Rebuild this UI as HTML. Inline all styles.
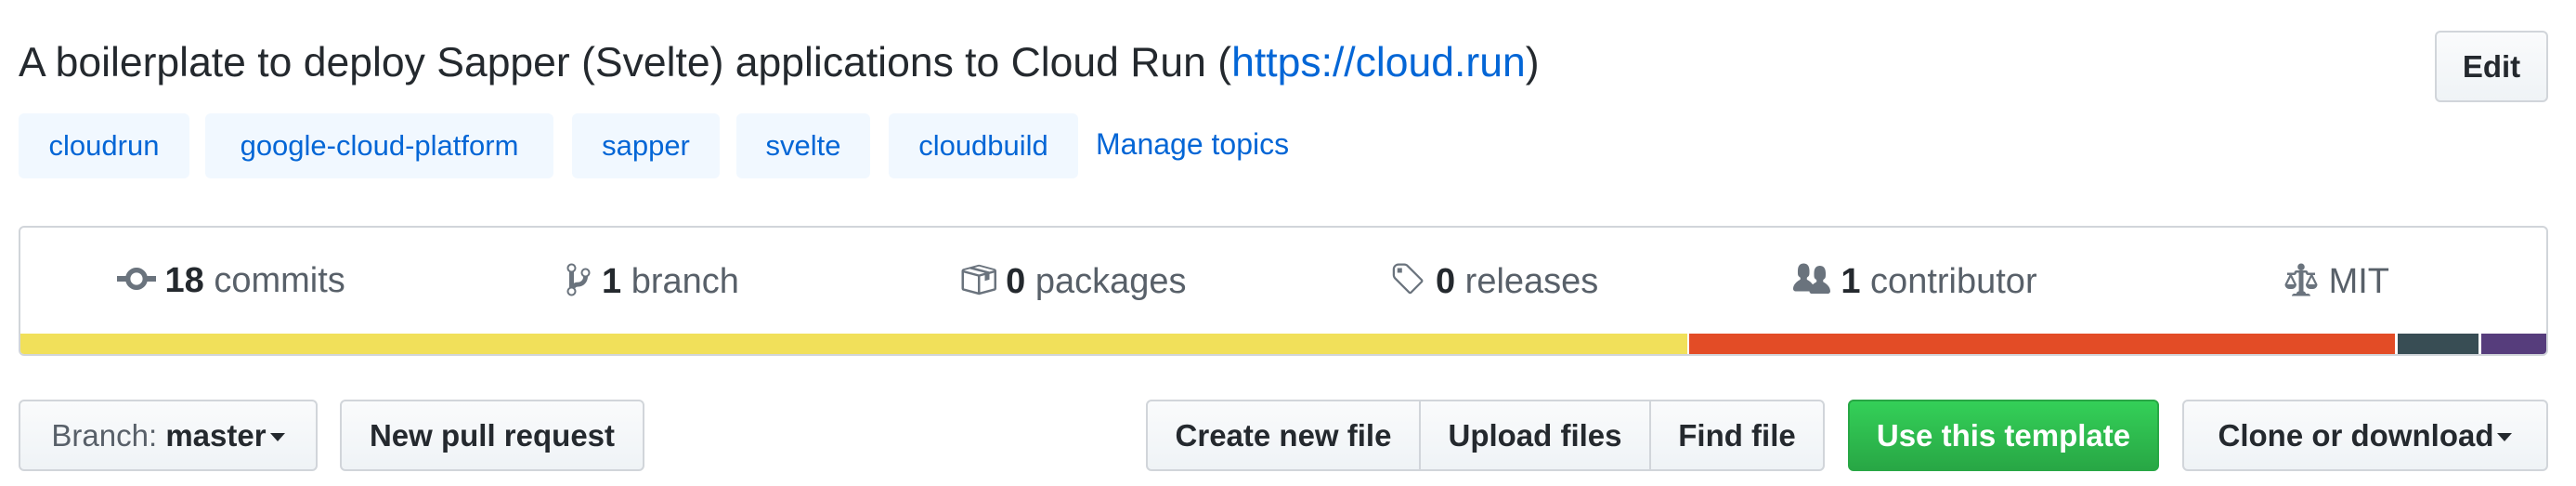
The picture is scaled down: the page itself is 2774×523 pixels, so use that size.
<!DOCTYPE html>
<html><head><meta charset="utf-8"><style>
*{box-sizing:border-box;margin:0;padding:0}
body{width:2774px;height:523px;background:#fff;font-family:"Liberation Sans",Arial,sans-serif;position:relative;overflow:hidden;color:#24292e}
.abs{position:absolute}
.title{left:20px;top:38px;font-size:44.5px;line-height:60px;white-space:nowrap}
.title a{color:#0366d6;text-decoration:none}
.topic{position:absolute;top:122px;height:70px;background:#f1f8ff;border-radius:6px;color:#0366d6;font-size:31px;line-height:70px;text-align:center}
.btn{position:absolute;top:430px;height:77px;border:2px solid #d1d5da;border-radius:6px;background:linear-gradient(#fafbfc,#eff3f6);font-size:33px;font-weight:bold;line-height:73px;text-align:center;white-space:nowrap}
.box{left:20px;top:243px;width:2724px;height:140px;border:2px solid #d1d5da;border-radius:6px;overflow:hidden}
.stats{display:flex;height:115px;align-items:center}
.stat{flex:1;text-align:center;font-size:38px;color:#586069;white-space:nowrap}
.stat b{color:#24292e}
.stat svg{vertical-align:-6px;margin-right:10px;fill:#6a737d}
.bar{position:absolute;left:0;bottom:0;height:22px;display:flex;width:100%}
.caret{display:inline-block;width:0;height:0;border-left:8px solid transparent;border-right:8px solid transparent;border-top:9px solid #24292e;vertical-align:5px;margin-left:4px}
</style></head><body>
<div class="abs title">A boilerplate to deploy Sapper (Svelte) applications to Cloud Run (<a>https://cloud.run</a>)</div>
<div class="btn" style="left:2622px;top:33px;width:122px;height:77px">Edit</div>

<div class="topic" style="left:20px;width:184px">cloudrun</div>
<div class="topic" style="left:221px;width:375px">google-cloud-platform</div>
<div class="topic" style="left:616px;width:159px">sapper</div>
<div class="topic" style="left:793px;width:144px">svelte</div>
<div class="topic" style="left:957px;width:204px">cloudbuild</div>
<div class="abs" style="left:1180px;top:120px;line-height:70px;font-size:32px;color:#0366d6">Manage topics</div>

<div class="abs box">
<div class="stats">
<div class="stat"><svg width="42" height="24" viewBox="0 0 14 8" style="vertical-align:2px"><path d="M10.86 3C10.41 1.28 8.86 0 7 0 5.14 0 3.590 1.28 3.14 3H0v2h3.14C3.59 6.72 5.14 8 7 8s3.41-1.28 3.86-3H14V3h-3.14zM7 6.2c-1.22 0-2.2-.98-2.2-2.2 0-1.22.98-2.2 2.2-2.2 1.22 0 2.2.98 2.2 2.2 0 1.22-.98 2.2-2.2 2.2z"/></svg><b>18</b> commits</div>
<div class="stat"><svg width="30" height="40" viewBox="0 0 10 16"><path d="M10 5c0-1.11-.89-2-2-2a1.993 1.993 0 00-1 3.72v.3c-.02.52-.23.98-.63 1.38-.4.4-.86.61-1.38.63-.83.02-1.48.16-2 .45V4.720a1.993 1.993 0 00-1-3.72C.88 1 0 1.89 0 3a2 2 0 001 1.72v6.56c-.59.35-1 .99-1 1.72 0 1.11.89 2 2 2 1.11 0 2-.89 2-2 0-.53-.2-1-.53-1.36.09-.06.48-.41.59-.47.25-.11.56-.17.94-.17 1.05-.05 1.95-.45 2.750-1.25S8.95 7.77 9 6.73h-.02C9.59 6.37 10 5.73 10 5zM2 1.8c.66 0 1.2.55 1.2 1.2 0 .65-.55 1.2-1.2 1.2C1.35 4.2.8 3.65.8 3c0-.65.55-1.2 1.2-1.2zm0 12.41c-.66 0-1.2-.55-1.2-1.2 0-.65.55-1.2 1.2-1.2.65 0 1.2.55 1.2 1.2 0 .65-.55 1.2-1.2 1.2zm6-8c-.66 0-1.2-.55-1.2-1.2 0-.65.55-1.2 1.2-1.2.65 0 1.2.55 1.2 1.2 0 .65-.55 1.2-1.2 1.2z"/></svg><b>1</b> branch</div>
<div class="stat"><svg width="40" height="40" viewBox="0 0 16 16"><path d="M1 4.27v7.47c0 .45.3.84.75.97l6.5 1.73c.16.05.34.05.5 0l6.5-1.73c.45-.13.75-.52.75-.97V4.27c0-.45-.3-.84-.75-.97l-6.5-1.74a1.4 1.4 0 00-.5 0L1.75 3.3c-.45.13-.75.52-.75.97zm7 9.09l-6-1.59V5l6 1.61v6.75zM2 4l2.5-.67L11 5.06l-2.5.67L2 4zm13 7.77l-6 1.590V6.61l2-.55V8.5l2-.53V5.53L15 5v6.77zm-2-7.24L6.5 2.8l2-.53L15 4l-2 .53z"/></svg><b>0</b> packages</div>
<div class="stat"><svg width="40" height="40" viewBox="0 0 15 16"><path d="M7.73 1.73C7.26 1.26 6.62 1 5.96 1H3.5C2.13 1 1 2.13 1 3.5v2.47c0 .66.27 1.3.73 1.77l6.06 6.06c.39.39 1.02.39 1.41 0l4.59-4.59a.996.996 0 000-1.41L7.73 1.73zM2.38 7.09c-.31-.3-.47-.7-.47-1.13V3.5c0-.88.72-1.59 1.59-1.59h2.47c.42 0 .83.16 1.13.47l6.14 6.13-4.73 4.73-6.13-6.15zM3.01 3h2v2H3V3h.01z"/></svg><b>0</b> releases</div>
<div class="stat"><svg width="42" height="40" viewBox="0 0 16 16"><path d="M16 12.999c0 .439-.45 1-1 1H7.995c-.539 0-.994-.447-.995-.999H1c-.54 0-1-.561-1-1 0-2.634 3-4 3-4s.229-.409 0-1c-.841-.621-1.058-.59-1-3 .058-2.419 1.367-3 2.5-3s2.442.58 2.5 3c.058 2.41-.159 2.379-1 3-.229.59 0 1 0 1s1.549.711 2.42 2.088C9.196 9.369 10 8.999 10 8.999s.229-.409 0-1c-.841-.62-1.058-.59-1-3 .058-2.419 1.367-3 2.5-3s2.437.581 2.495 3c.059 2.41-.158 2.38-1 3-.229.59 0 1 0 1s3.005 1.366 3.005 4z"/></svg><b>1</b> contributor</div>
<div class="stat"><svg width="40" height="40" viewBox="0 0 14 16"><path d="M7 4c-.83 0-1.5-.67-1.5-1.5S6.17 1 7 1s1.5.67 1.5 1.5S7.83 4 7 4zm7 6c0 1.11-.89 2-2 2h-1c-1.11 0-2-.89-2-2l2-4h-1c-.55 0-1-.45-1-1H8v8c.42 0 1 .45 1 1h1c.42 0 1 .45 1 1H3c0-.55.58-1 1-1h1c0-.55.58-1 1-1h.03L6 5H5c0 .55-.45 1-1 1H3l2 4c0 1.11-.89 2-2 2H2c-1.11 0-2-.89-2-2l2-4H1V5h3c0-.55.45-1 1-1h4c.55 0 1 .45 1 1h3v1h-1l2 4zM2.5 7L1 10h3L2.5 7zM13 10l-1.5-3-1.5 3h3z"/></svg>MIT</div>
</div>
<div class="bar">
<div style="width:1795px;background:#f1e05a"></div>
<div style="width:760px;background:#e34c26;margin-left:2px"></div>
<div style="width:87px;background:#384d54;margin-left:3px"></div>
<div style="flex:1;background:#563d7c;margin-left:3px"></div>
</div>
</div>

<div class="btn" style="left:20px;width:322px;font-weight:normal;color:#586069">Branch: <b style="color:#24292e">master</b><span class="caret"></span></div>
<div class="btn" style="left:366px;width:328px">New pull request</div>
<div class="btn" style="left:1234px;width:296px;border-radius:6px 0 0 6px">Create new file</div>
<div class="btn" style="left:1528px;width:250px;border-radius:0">Upload files</div>
<div class="btn" style="left:1776px;width:189px;border-radius:0 6px 6px 0">Find file</div>
<div class="btn" style="left:1990px;width:335px;background:linear-gradient(#34d058,#28a745);border-color:#28a745;color:#fff">Use this template</div>
<div class="btn" style="left:2350px;width:394px">Clone or download<span class="caret"></span></div>
</body></html>
